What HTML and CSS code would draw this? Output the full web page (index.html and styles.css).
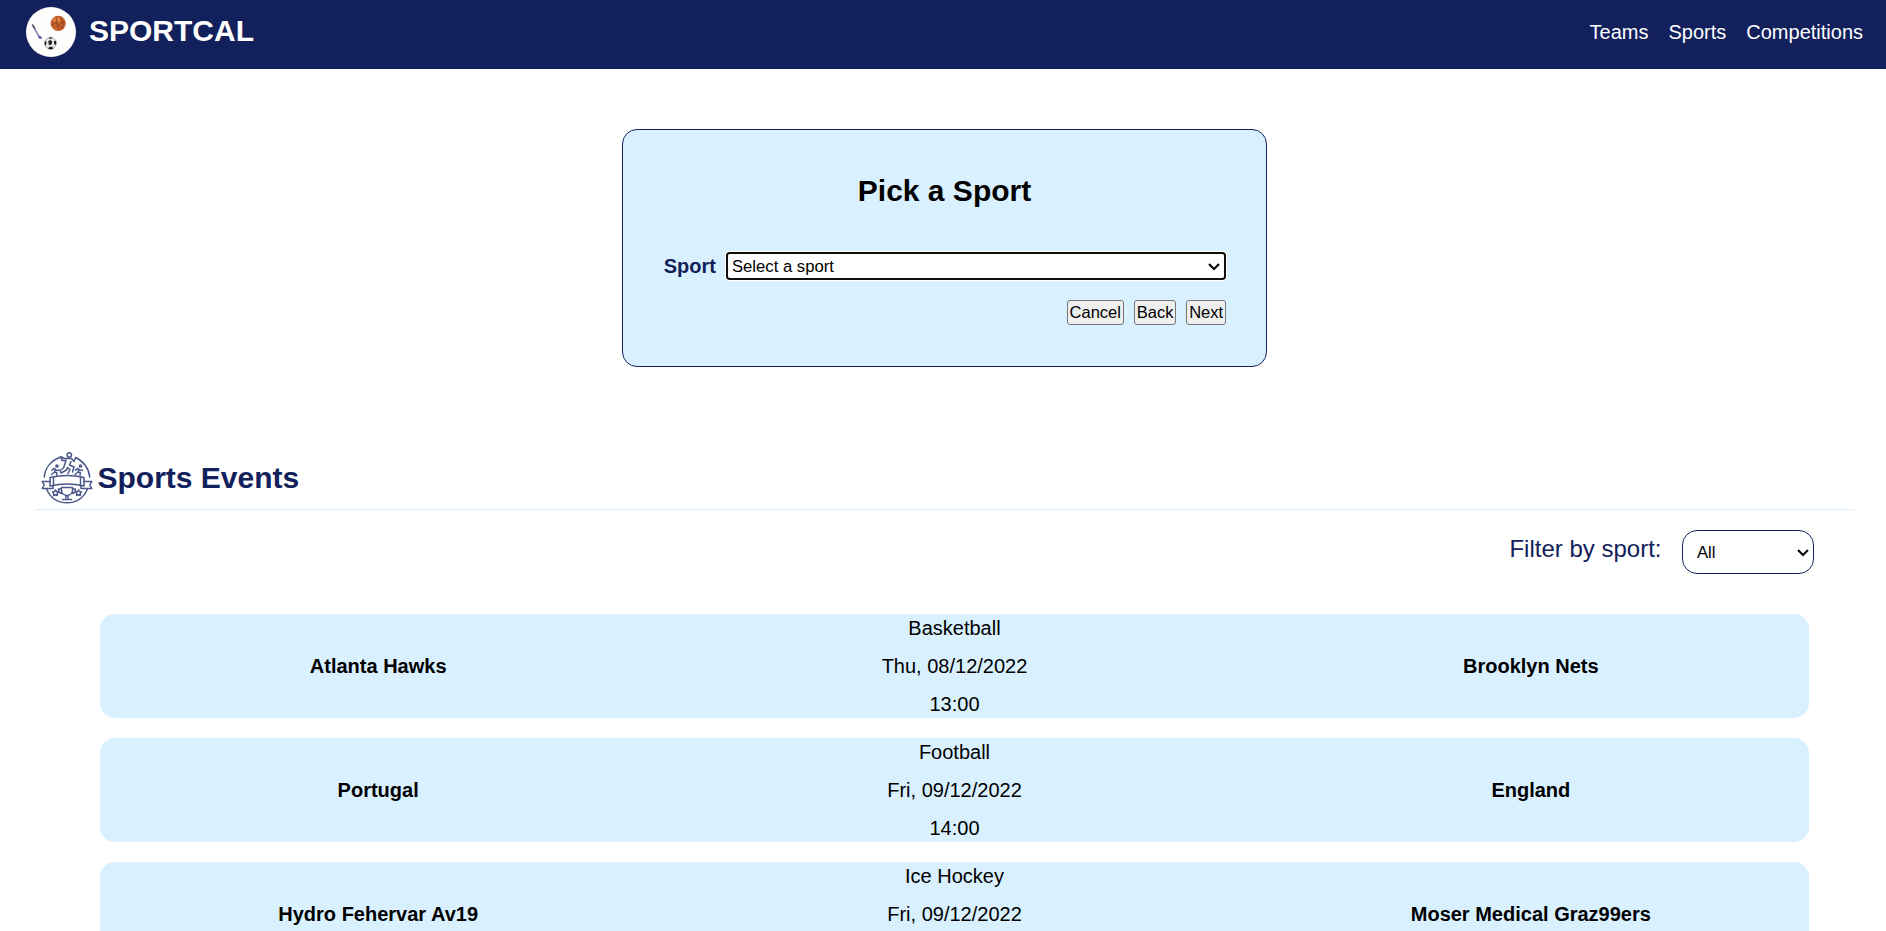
FILE: index.html
```html
<!DOCTYPE html>
<html lang="en">
<head>
<meta charset="utf-8">
<title>SportCal</title>
<link rel="stylesheet" href="styles.css">
</head>
<body>
<header class="header">
  <div class="brand">
    <svg class="logo" viewBox="0 0 50 50">
      <circle cx="25" cy="25" r="25" fill="#fdfdfc"/>
      <circle cx="32.200" cy="16.300" r="7.600" fill="#c9622c"/>
      <circle cx="30.500" cy="14" r="4" fill="#dc7b3f"/>
      <path d="M25 14c5 3 9 2 14 1M30 9c1 5 0 10 4 14.500M25 18c5-3 9 0 12 4M34 9c3 4 3 8 3 12" fill="none" stroke="#7c3518" stroke-width=".7"/>
      <path d="M6.300 17.500 9 22" stroke="#56505c" stroke-width="1.600"/>
      <path d="M8.500 21.500 13.500 30.300q.8 1.200 2.500.2" fill="none" stroke="#7b72b8" stroke-width="1.500"/>
      <circle cx="13.800" cy="30.200" r="1.200" fill="#5540b5"/>
      <circle cx="24.500" cy="36.300" r="5.800" fill="#e8e8e8" stroke="#8d8d8d" stroke-width=".7"/>
      <path d="m22.300 34 2.200-1 1.700 1.500-.5 3-2.900.5zM22.500 30.500h4l-2 1.700zM18.700 34l2 1-.8 3.500-1.200-.5zM30.300 34l-2.500 0 .4 3.500 1.700.4zM22 41.800l1.300-2 3 0 1 2-2.200.6z" fill="#222"/>
    </svg>
    <span class="brand-name">SPORTCAL</span>
  </div>
  <nav class="nav"><a>Teams</a><a>Sports</a><a>Competitions</a></nav>
</header>

<form class="picker">
  <h2 class="picker-title">Pick a Sport</h2>
  <div class="field">
    <label class="field-label" for="sport">Sport</label>
    <select class="sport-select" id="sport"><option>Select a sport</option></select>
  </div>
  <div class="actions">
    <button class="btn" type="button">Cancel</button>
    <button class="btn" type="button">Back</button>
    <button class="btn" type="button">Next</button>
  </div>
</form>

<main class="events">
  <div class="events-head">
    <svg class="events-icon" viewBox="0 0 52 52" fill="none" stroke="#4a578a" stroke-width="1.500" stroke-linejoin="round" stroke-linecap="round">
      <path d="M3.300 25C4 16.500 9.500 9 18.500 5.500M34.500 5.500C42.500 9 48 16.500 48.700 25M5.500 37C9.500 46 17 50.800 26 50.800S42.500 46 46.500 37"/>
      <path d="M9 25.500Q26 21.500 43 25.500V34Q26 30 9 34zM12.500 25V33M39.500 25V33"/>
      <path d="M9 29.500H1.200L3.200 33 1.200 36.500H12V34M43 29.500H50.800L48.800 33 50.800 36.500H40V34"/>
      <circle cx="28.300" cy="3" r="2.200"/>
      <path d="M19.500 4.500 21 8.500 25 8.500 22.500 16 19 18.500 20 21 25.500 18 26.500 15.500 29 17.500 27 21.500M20.500 5 23 6.500 30.500 6.500 33 9.500 34.500 6M30 9.500 28.500 13 33 15 31.500 20"/>
      <circle cx="16" cy="14" r="1.100"/><circle cx="39.500" cy="14" r="1.100"/>
      <path d="M11 18 13.500 16.500 15.500 18.500 18 18M14.500 17.500 13.500 20 10.500 22.500M13.500 20 16 21 15.500 23.200M34.500 18 37 16.500 39 18.500 41.500 18M38 17.500 37 20 34 22.500M37 20 39.500 21 39 23.200"/>
      <path d="M20.500 35.500H31.500V39Q31 43 26 43.500 21 43 20.500 39zM20.500 37H17.500Q17.500 41.500 21.500 41.500M31.500 37H34.500Q34.500 41.500 30.500 41.500M25 43.500V46M27 43.500V46M21.500 47.500H30.500"/>
      <path d="m14.500 38 1 1.600 1.900.5-1.200 1.500.1 1.900-1.800-.7-1.800.7.1-1.900-1.200-1.500 1.900-.5zM37.500 38l1 1.600 1.900.5-1.200 1.500.1 1.900-1.800-.7-1.800.7.1-1.900-1.200-1.500 1.900-.5z"/>
    </svg>
    <h2 class="events-title">Sports Events</h2>
  </div>
  <div class="filter">
    <label class="filter-label" for="filter">Filter by sport:</label>
    <select class="filter-select" id="filter"><option>All</option></select>
  </div>
  <div class="event-list">
    <article class="event">
      <strong>Atlanta Hawks</strong>
      <div class="details"><span>Basketball</span><span>Thu, 08/12/2022</span><span>13:00</span></div>
      <strong>Brooklyn Nets</strong>
    </article>
    <article class="event">
      <strong>Portugal</strong>
      <div class="details"><span>Football</span><span>Fri, 09/12/2022</span><span>14:00</span></div>
      <strong>England</strong>
    </article>
    <article class="event">
      <strong>Hydro Fehervar Av19</strong>
      <div class="details"><span>Ice Hockey</span><span>Fri, 09/12/2022</span></div>
      <strong>Moser Medical Graz99ers</strong>
    </article>
  </div>
</main>
</body>
</html>
```
FILE: styles.css
```css
* { box-sizing: border-box; }
body {
  margin: 0;
  height: 931px;
  overflow: hidden;
  font: 20px/24px "Liberation Sans", Arial, sans-serif;
  color: #000;
  background: #fff;
}
.header {
  height: 69px;
  padding: 7px 23px 12px 26px;
  display: flex;
  justify-content: space-between;
  align-items: center;
  background: #12205b;
  color: #fff;
}
.brand { display: flex; align-items: center; gap: 13px; }
.logo { width: 50px; height: 50px; }
.brand-name { margin-bottom: 2px; font-size: 30px; font-weight: bold; line-height: 34px; }
.nav { display: flex; gap: 20px; }
.picker {
  width: 645px;
  height: 238px;
  margin: 60px 0 0 622px;
  padding: 44px 40px 0;
  border: 1px solid #12205b;
  border-radius: 15px;
  background: #d9f0ff;
}
.picker-title { margin: 0 0 44px; font-size: 30px; line-height: 34px; text-align: center; }
.field { display: flex; align-items: center; justify-content: flex-end; gap: 10px; height: 28px; }
.field-label { color: #12205b; font-weight: bold; }
.sport-select {
  zoom: 1.25;
  width: 400px;
  height: 22.4px;
  padding: 0;
  border: 1.6px solid #101010;
  border-radius: 3px;
  box-shadow: 0 0 0 1px #fff;
  background: #fff;
  color: #000;
  font: 13.333px "Liberation Sans", Arial, sans-serif;
  text-indent: -0.8px;
}
.actions { display: flex; justify-content: flex-end; gap: 10px; margin-top: 20px; }
.btn {
  height: 25px;
  padding: 0 1.900px;
  border: 1px solid #767676;
  border-radius: 3px;
  background: #efefef;
  color: #000;
  font: 16.500px "Liberation Sans", Arial, sans-serif;
}
.events { padding: 77px 32px 0 35px; }
.events-head {
  display: flex;
  align-items: center;
  gap: 5px;
  height: 66px;
  padding: 0 0 0 5.500px;
  border-bottom: 1px solid #d9f0ff;
}
.events-icon { width: 52px; height: 52px; margin-top: 2px; }
.events-title { margin: 2px 0 0; font-size: 30px; line-height: 34px; color: #12205b; }
.filter {
  display: flex;
  justify-content: flex-end;
  gap: 20.500px;
  padding: 20px 40px 40px 0;
}
.filter-label { padding-top: 5px; font-size: 24px; line-height: 28px; color: #12205b; }
.filter-select {
  zoom: 1.25;
  width: 105.6px;
  height: 35.2px;
  padding: 0 0.8px 0 7.2px;
  border: 1px solid #12205b;
  border-radius: 12px;
  background: #fff;
  color: #000;
  font: 13.333px "Liberation Sans", Arial, sans-serif;
}
.event-list { display: grid; gap: 20px; padding: 0 45px 0 65px; }
.event {
  display: grid;
  grid-template-columns: repeat(3, 1fr);
  column-gap: 20px;
  align-items: center;
  height: 104px;
  border-radius: 15px;
  background: #d9f0ff;
  text-align: center;
}
.details { display: grid; grid-template-rows: repeat(3, 24px); gap: 14px; }
```
